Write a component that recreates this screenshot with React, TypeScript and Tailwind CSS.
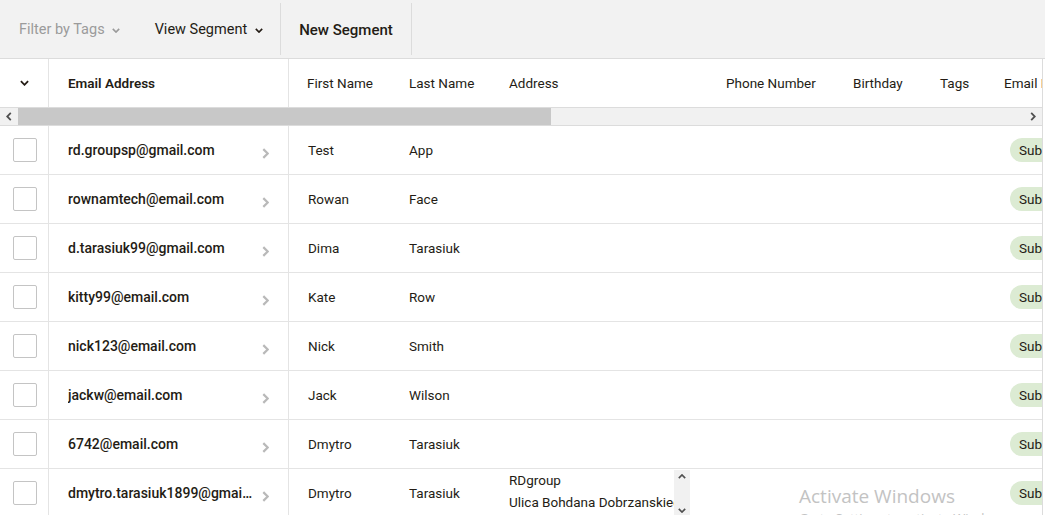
import React from 'react';

const rows = [
  { email: "rd.groupsp@gmail.com", first: "Test", last: "App" },
  { email: "rownamtech@email.com", first: "Rowan", last: "Face" },
  { email: "d.tarasiuk99@gmail.com", first: "Dima", last: "Tarasiuk" },
  { email: "kitty99@email.com", first: "Kate", last: "Row" },
  { email: "nick123@email.com", first: "Nick", last: "Smith" },
  { email: "jackw@email.com", first: "Jack", last: "Wilson" },
  { email: "6742@email.com", first: "Dmytro", last: "Tarasiuk" },
  { email: "dmytro.tarasiuk1899@gmail.com", first: "Dmytro", last: "Tarasiuk", address: true },
];

const Chevron = ({ className }: { className?: string }) => (
  <svg viewBox="0 0 10 6" className={className} fill="none" stroke="currentColor" strokeWidth="2">
    <path d="M1 1l4 4 4-4" />
  </svg>
);

const ArrowRight = () => (
  <svg viewBox="0 0 6 10" className="w-[7px] h-[11px] text-[#b9b9b9]" fill="none" stroke="currentColor" strokeWidth="2">
    <path d="M1 1l4 4-4 4" />
  </svg>
);

export default function App() {
  return (
    <div className="relative w-[1045px] h-[515px] overflow-hidden bg-white text-[#241c15] font-['Roboto',sans-serif] text-[13.5px]">
      {/* toolbar */}
      <div className="flex h-[59px] items-stretch bg-[#f2f2f2] border-b border-[#dcdcdc] text-[14.5px]">
        <div className="flex items-center gap-[7px] pl-[19px] pr-[35px] pt-[2px] text-[#9b9b9b]">
          <span>Filter by Tags</span>
          <Chevron className="w-[8px] h-[5px]" />
        </div>
        <div className="flex items-center gap-[8px] pr-[17px] pt-[2px]">
          <span>View Segment</span>
          <Chevron className="w-[8px] h-[5px]" />
        </div>
        <div className="my-[3px] w-px bg-[#dcdcdc]" />
        <div className="flex items-center px-[18px] pt-[2px] font-medium text-[15px]">New Segment</div>
        <div className="my-[3px] w-px bg-[#dcdcdc]" />
      </div>

      <div className="w-[1043px] overflow-hidden border-r border-[#dcdcdc]">
        {/* header */}
        <div className="flex h-[48px] items-center w-[1300px]">
          <div className="w-[49px] h-full flex items-center justify-center border-r border-[#e4e4e4]">
            <Chevron className="w-[9px] h-[6px] text-[#241c15]" />
          </div>
          <div className="w-[240px] h-full flex items-center pl-[19px] font-semibold border-r border-[#e4e4e4]">Email Address</div>
          <div className="w-[101px] pl-[18px]">First Name</div>
          <div className="w-[100px] pl-[19px]">Last Name</div>
          <div className="w-[217px] pl-[19px]">Address</div>
          <div className="w-[127px] pl-[19px]">Phone Number</div>
          <div className="w-[87px] pl-[19px]">Birthday</div>
          <div className="w-[64px] pl-[19px]">Tags</div>
          <div className="w-[200px] pl-[19px] whitespace-nowrap">Email Marketing</div>
        </div>

        {/* horizontal scrollbar */}
        <div className="flex h-[19px] items-stretch bg-[#f1f1f1] border-y border-[#dcdcdc]">
          <div className="w-[18px] flex items-center justify-center">
            <svg viewBox="0 0 6 10" className="w-[6px] h-[9px] text-[#505050]" fill="none" stroke="currentColor" strokeWidth="2">
              <path d="M5 1L1 5l4 4" />
            </svg>
          </div>
          <div className="w-[533px] bg-[#c8c8c8]" />
          <div className="flex-1" />
          <div className="w-[18px] flex items-center justify-center">
            <svg viewBox="0 0 6 10" className="w-[6px] h-[9px] text-[#505050]" fill="none" stroke="currentColor" strokeWidth="2">
              <path d="M1 1l4 4-4 4" />
            </svg>
          </div>
        </div>

        {/* rows */}
        {rows.map((r, i) => (
          <div key={i} className="flex h-[49px] items-center w-[1300px] border-b border-[#e4e4e4]">
            <div className="w-[49px] h-full flex items-center pl-[13px] border-r border-[#e4e4e4]">
              <div className="w-[24px] h-[24px] rounded-[2px] border border-[#c4c4c4] bg-white" />
            </div>
            <div className="w-[240px] h-full flex items-center pl-[19px] pr-[19px] border-r border-[#e4e4e4] font-medium text-[14px]">
              <span className="w-[186px] truncate">{r.email}</span>
              <span className="ml-auto mt-[6px]"><ArrowRight /></span>
            </div>
            <div className="w-[101px] pl-[19px]">{r.first}</div>
            <div className="w-[100px] pl-[19px]">{r.last}</div>
            <div className="w-[217px] pl-[19px] h-full flex">
              {r.address && (
                <div className="flex w-[181px] h-full">
                  <div className="flex-1 overflow-hidden whitespace-nowrap leading-[22px]">
                    <div>RDgroup</div>
                    <div>Ulica Bohdana Dobrzanskiego</div>
                  </div>
                  <div className="w-[16px] mt-[1px] bg-[#f1f1f1] flex flex-col items-center justify-between py-[4px]">
                    <svg viewBox="0 0 10 6" className="w-[8px] h-[5px] text-[#505050]" fill="none" stroke="currentColor" strokeWidth="2"><path d="M1 5l4-4 4 4" /></svg>
                    <svg viewBox="0 0 10 6" className="w-[8px] h-[5px] text-[#505050]" fill="none" stroke="currentColor" strokeWidth="2"><path d="M1 1l4 4 4-4" /></svg>
                  </div>
                </div>
              )}
            </div>
            <div className="w-[127px]" />
            <div className="w-[87px]" />
            <div className="w-[64px]" />
            <div className="w-[200px] pl-[25px]">
              <span className="inline-flex h-[24px] items-center rounded-full bg-[#dcebd3] px-[9px]">Subscribed</span>
            </div>
          </div>
        ))}
      </div>

      {/* Windows watermark */}
      <div className="absolute left-[799px] top-[484px] text-[#c3c3c3] font-['Open_Sans',sans-serif] pointer-events-none">
        <div className="text-[19px] leading-[24px]">Activate Windows</div>
        <div className="text-[13px] leading-[20px]">Go to Settings to activate Windows.</div>
      </div>
    </div>
  );
}
